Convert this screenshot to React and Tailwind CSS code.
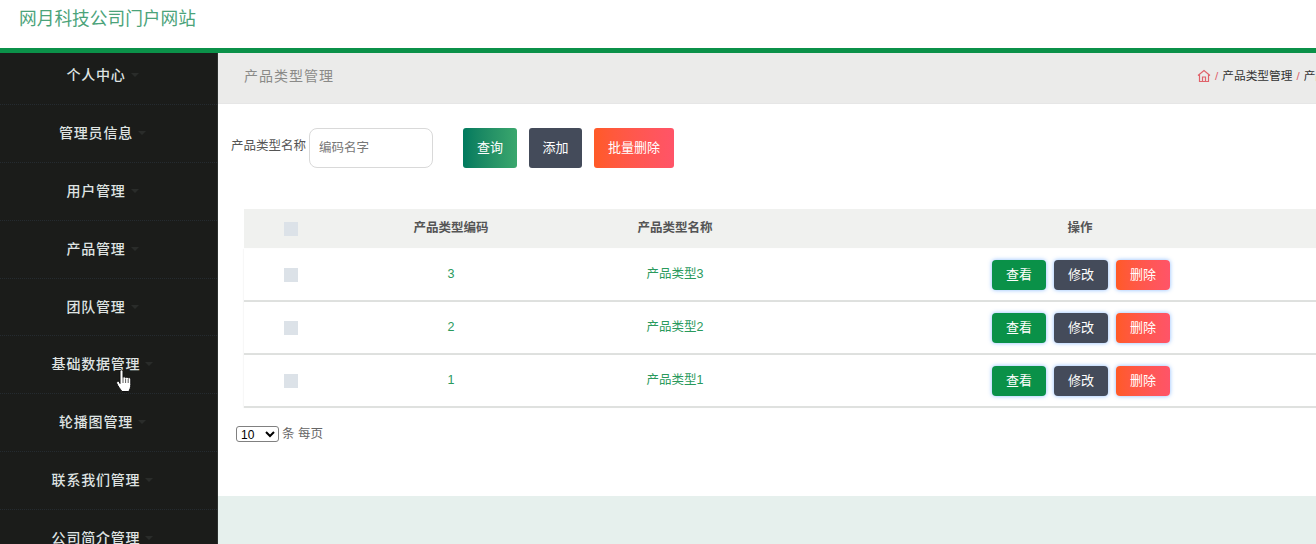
import React from 'react';

const fontCn = 'font-["Liberation_Sans","Noto_Sans_CJK_SC",sans-serif]';

const menus = ['个人中心', '管理员信息', '用户管理', '产品管理', '团队管理', '基础数据管理', '轮播图管理', '联系我们管理', '公司简介管理'];
const rows = [
    { code: '3', name: '产品类型3' },
    { code: '2', name: '产品类型2' },
    { code: '1', name: '产品类型1' }
];

const Cursor = () => (
    <svg className="absolute left-[116px] top-[33px]" width="18" height="24" viewBox="0 0 18 24">
        <path
            d="M4 2C4 .5 7 .5 7 2V8.500c.3-1 2.300-1 2.600.3.3-1 2.300-.9 2.600.4.4-.8 2.400-.6 2.600.8V15.500c0 3-1 5-2 7H6C4 19.500 2 17.500.8 14.500.2 12.800 2 11.500 3.300 13L4 14.500Z"
            fill="#fff"
            stroke="#111"
            strokeWidth="1"
        />
        <path d="M7 9v5M9.600 9.500V14M12.200 10v4" stroke="#333" strokeWidth=".8" />
    </svg>
);

const Sidebar = () => (
    <aside className="w-[218px] shrink-0 bg-[#1b1c1a] border-r border-[#2c302e] overflow-hidden">
        <div className="-mt-[6px]">
            {menus.map((m, i) => (
                <div
                    key={m}
                    className="relative h-[57.900px] flex items-center justify-center border-b border-dotted border-[#252b30] pr-[25px]"
                >
                    <span className="relative text-[14px] font-medium text-[#dfe3e2] tracking-[0.8px] whitespace-nowrap">
                        {m}
                        <span className="absolute left-full top-[8px] ml-[5px] w-0 h-0 border-x-[4px] border-x-transparent border-t-[4px] border-t-[#2a2c2a]" />
                    </span>
                    {i === 5 && <Cursor />}
                </div>
            ))}
        </div>
    </aside>
);

const Checkbox = () => <span className="block w-[14px] h-[14px] bg-[#dce2e8]" />;

const ActionBtn = ({ children, className }) => (
    <button className={`w-[54px] h-[30px] rounded-[4px] text-[13px] text-white shadow-[0_0_4px_rgba(90,160,255,0.7)] ${className}`}>
        {children}
    </button>
);

export default function App() {
    return (
        <div className={`w-[1316px] h-[544px] overflow-hidden flex flex-col bg-white ${fontCn}`}>
            <header className="h-[53px] shrink-0 bg-white border-b-[5px] border-[#0b9149] pl-[19px] pt-[7px]">
                <span className="text-[17.700px] leading-[24px] text-[#4ba37a]">网月科技公司门户网站</span>
            </header>
            <div className="flex flex-1 min-h-0">
                <Sidebar />
                <main className="flex-1 min-w-0 bg-[#e6f0ed] overflow-hidden">
                    <div className="h-[51px] bg-[#ebebea] border-b border-[#e6e6e6] flex items-center justify-between pl-[26px] pb-[4px]">
                        <span className="text-[14px] text-[#8a8a88] tracking-[1px]">产品类型管理</span>
                        <div className="flex items-center text-[11.700px] text-[#333] whitespace-nowrap w-[119px] overflow-hidden">
                            <svg width="14" height="14" viewBox="0 0 14 14" fill="none" stroke="#e0626a" strokeWidth="1.200" className="shrink-0">
                                <path d="M1 6.500 7 1.500l6 5M2.500 5.500V12.500h9V5.500M5.500 12.500V8h3v4.500" />
                            </svg>
                            <span className="text-[#e0626a] mx-[4px]">/</span>
                            <span>产品类型管理</span>
                            <span className="text-[#e0626a] mx-[4px]">/</span>
                            <span>产品类型管理</span>
                        </div>
                    </div>
                    <div className="h-[392px] bg-white">
                        <div className="flex items-center pl-[13px] pt-[24px] h-[64px]">
                            <span className="text-[12.500px] text-[#555] mr-[3px] mb-[3px]">产品类型名称</span>
                            <input
                                placeholder="编码名字"
                                className="w-[124px] h-[40px] px-[9px] rounded-[8px] border border-[#d9d9d9] text-[12.500px] placeholder:text-[#777] outline-none"
                            />
                            <button className="ml-[30px] w-[54px] h-[40px] rounded-[3px] text-[13px] text-white bg-gradient-to-r from-[#007a5e] to-[#3aa76d]">查询</button>
                            <button className="ml-[12px] w-[53px] h-[40px] rounded-[3px] text-[13px] text-white bg-[#444b5a]">添加</button>
                            <button className="ml-[12px] w-[80px] h-[40px] rounded-[3px] text-[13px] text-white bg-gradient-to-r from-[#ff5a26] to-[#ff5468]">批量删除</button>
                        </div>
                        <div className="ml-[26px] mt-[41px] w-[1130px]">
                            <div className="grid grid-cols-[94px_226px_222px_588px] items-center h-[39px] bg-[#f0f1ef] text-[12.500px] font-bold text-[#555] text-center">
                                <span className="flex justify-center"><Checkbox /></span>
                                <span>产品类型编码</span>
                                <span>产品类型名称</span>
                                <span>操作</span>
                            </div>
                            <div className="pt-px">
                                {rows.map((r) => (
                                    <div
                                        key={r.code}
                                        className="grid grid-cols-[94px_226px_222px_588px] items-center h-[53px] bg-white border-b-2 border-[#dfe1df] shadow-[-1px_0_1px_rgba(0,0,0,0.03)] text-[12.500px] text-[#2a9a5c] text-center"
                                    >
                                        <span className="flex justify-center"><Checkbox /></span>
                                        <span>{r.code}</span>
                                        <span>{r.name}</span>
                                        <span className="flex justify-center gap-[8px] translate-x-px">
                                            <ActionBtn className="bg-[#0a9148]">查看</ActionBtn>
                                            <ActionBtn className="bg-[#444b5a]">修改</ActionBtn>
                                            <ActionBtn className="bg-gradient-to-r from-[#ff5a26] to-[#ff5468]">删除</ActionBtn>
                                        </span>
                                    </div>
                                ))}
                            </div>
                        </div>
                        <div className="flex items-center ml-[18px] mt-[17px] text-[12.500px] text-[#666]">
                            <select className="w-[43px] h-[16px] border border-[#808080] rounded-[3px] text-[12px] text-black bg-white appearance-auto">
                                <option>10</option>
                            </select>
                            <span className="ml-[3px]">条 每页</span>
                        </div>
                    </div>
                </main>
            </div>
        </div>
    );
}
